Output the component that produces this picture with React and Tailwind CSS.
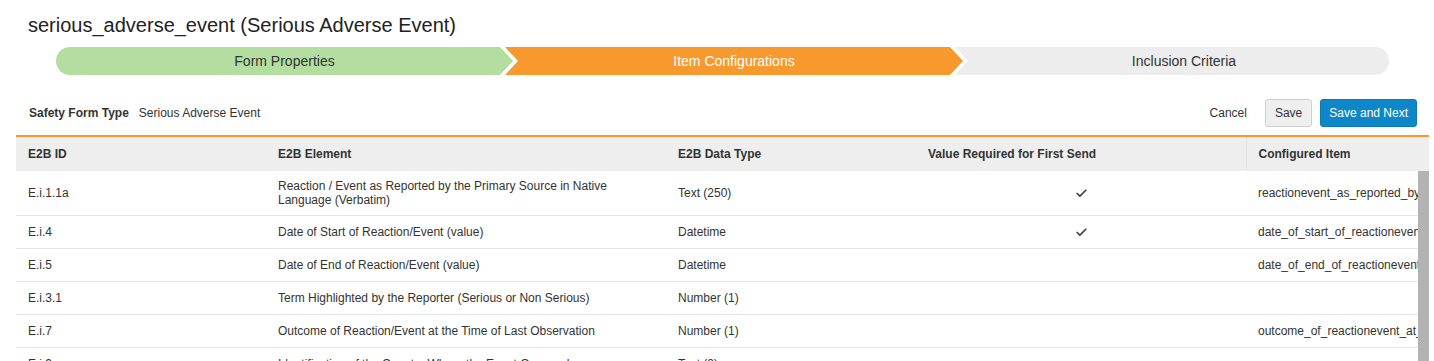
import React from 'react';
import { Check } from 'lucide-react';

const steps = [
  { label: 'Form Properties', cls: 'w-[457px] rounded-l-full bg-[#b4dea0] text-[#333] [clip-path:polygon(0_0,calc(100%_-_13px)_0,100%_50%,calc(100%_-_13px)_100%,0_100%)]' },
  { label: 'Item Configurations', cls: 'w-[458px] -ml-[8px] bg-[#f7992d] text-white [clip-path:polygon(0_0,calc(100%_-_13px)_0,100%_50%,calc(100%_-_13px)_100%,0_100%,13px_50%)]' },
  { label: 'Inclusion Criteria', cls: 'flex-1 -ml-[8px] pl-[24px] rounded-r-full bg-[#ededed] text-[#333] [clip-path:polygon(0_0,100%_0,100%_100%,0_100%,13px_50%)]' },
];

const rows = [
  { id: 'E.i.1.1a', element: 'Reaction / Event as Reported by the Primary Source in Native Language (Verbatim)', type: 'Text (250)', required: true, item: 'reactionevent_as_reported_by_the_primary_source' },
  { id: 'E.i.4', element: 'Date of Start of Reaction/Event (value)', type: 'Datetime', required: true, item: 'date_of_start_of_reactionevent_value' },
  { id: 'E.i.5', element: 'Date of End of Reaction/Event (value)', type: 'Datetime', required: false, item: 'date_of_end_of_reactionevent_value' },
  { id: 'E.i.3.1', element: 'Term Highlighted by the Reporter (Serious or Non Serious)', type: 'Number (1)', required: false, item: '' },
  { id: 'E.i.7', element: 'Outcome of Reaction/Event at the Time of Last Observation', type: 'Number (1)', required: false, item: 'outcome_of_reactionevent_at_the_time' },
  { id: 'E.i.9', element: 'Identification of the Country Where the Event Occurred', type: 'Text (2)', required: false, item: '' },
];

const Cols = () => (
  <colgroup>
    <col className="w-[250px]" />
    <col className="w-[400px]" />
    <col className="w-[250px]" />
    <col className="w-[330px]" />
    <col />
  </colgroup>
);

const App = () => {
  return (
    <div className="w-[1434px] h-[361px] overflow-hidden bg-white text-[#333] font-['Liberation_Sans',Arial,sans-serif]">
      {/* Title */}
      <h1 className="pl-[28px] pt-[13px] text-[20px] leading-[24px] text-[#222]">
        serious_adverse_event (Serious Adverse Event)
      </h1>

      {/* Wizard steps */}
      <div className="mt-[10px] ml-[56px] w-[1333px] h-[28px] flex">
        {steps.map((s) => (
          <div key={s.label} className={`h-full flex items-center justify-center text-[14px] ${s.cls}`}>
            {s.label}
          </div>
        ))}
      </div>

      {/* Form type + actions */}
      <div className="mt-[24px] pl-[29px] pr-[17px] h-[28px] flex items-center justify-between text-[12px]">
        <div className="flex items-center gap-[10px]">
          <span className="font-bold">Safety Form Type</span>
          <span>Serious Adverse Event</span>
        </div>
        <div className="flex items-center">
          <button className="mr-[18px] text-[#333]">Cancel</button>
          <button className="h-[28px] px-[9px] mr-[8px] rounded-[3px] border border-[#cfcfcf] bg-[#efefef] text-[#333]">Save</button>
          <button className="h-[28px] px-[8px] rounded-[3px] border border-[#0b7bb8] bg-[#0e87c8] text-white">Save and Next</button>
        </div>
      </div>

      {/* Table */}
      <div className="mt-[8px] ml-[16px] w-[1413px] border-t-2 border-[#f7992d] text-[12px]">
        <table className="w-full table-fixed bg-[#eeeeee]">
          <Cols />
          <thead>
            <tr className="h-[34px] text-left font-bold">
              <th className="px-[12px]">E2B ID</th>
              <th className="px-[12px]">E2B Element</th>
              <th className="px-[12px]">E2B Data Type</th>
              <th className="px-[12px]">Value Required for First Send</th>
              <th className="px-[12px] border-l border-[#e4e4e4]">Configured Item</th>
            </tr>
          </thead>
        </table>
        <div className="flex">
          <div className="w-[1402px] overflow-hidden">
            <table className="w-full table-fixed">
              <Cols />
              <tbody>
                {rows.map((r) => (
                  <tr key={r.id} className="border-b border-[#e6e6e6]">
                    <td className="h-[33px] px-[12px] py-[8px] leading-[14px]">{r.id}</td>
                    <td className="h-[33px] px-[12px] py-[8px] leading-[14px]">{r.element}</td>
                    <td className="h-[33px] px-[12px] py-[8px] leading-[14px]">{r.type}</td>
                    <td className="h-[33px] px-[12px] py-[8px] leading-[14px]">
                      {r.required && (
                        <div className="flex justify-center">
                          <Check size={13} strokeWidth={3.2} className="text-[#444]" />
                        </div>
                      )}
                    </td>
                    <td className="h-[33px] px-[12px] py-[8px] leading-[14px] whitespace-nowrap overflow-hidden">{r.item}</td>
                  </tr>
                ))}
              </tbody>
            </table>
          </div>
          <div className="w-[11px] bg-[#b3b3b3]" />
        </div>
      </div>
    </div>
  );
};

export default App;
